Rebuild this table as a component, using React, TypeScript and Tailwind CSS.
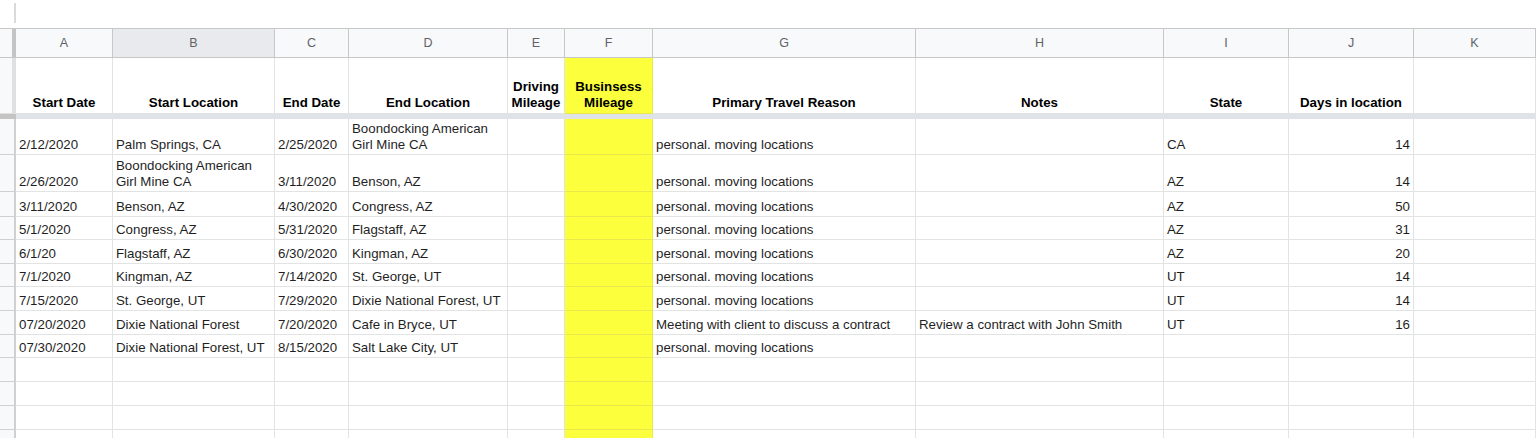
import clsx from "clsx";

type Col = { key: string; w: string; align?: "left" | "right" };

const COLS: Col[] = [
  { key: "A", w: "w-[97px]" },
  { key: "B", w: "w-[162px]" },
  { key: "C", w: "w-[74px]" },
  { key: "D", w: "w-[159px]" },
  { key: "E", w: "w-[57px]" },
  { key: "F", w: "w-[88px]" },
  { key: "G", w: "w-[263px]" },
  { key: "H", w: "w-[248px]" },
  { key: "I", w: "w-[125px]" },
  { key: "J", w: "w-[125px]", align: "right" },
  { key: "K", w: "flex-1" },
];

const HEADERS = [
  "Start Date",
  "Start Location",
  "End Date",
  "End Location",
  "Driving Mileage",
  "Businsess Mileage",
  "Primary Travel Reason",
  "Notes",
  "State",
  "Days in location",
  "",
];

const MOVE = "personal. moving locations";
const BOON = "Boondocking American Girl Mine CA";

const ROWS: string[][] = [
  ["2/12/2020", "Palm Springs, CA", "2/25/2020", BOON, "", "", MOVE, "", "CA", "14", ""],
  ["2/26/2020", BOON, "3/11/2020", "Benson, AZ", "", "", MOVE, "", "AZ", "14", ""],
  ["3/11/2020", "Benson, AZ", "4/30/2020", "Congress, AZ", "", "", MOVE, "", "AZ", "50", ""],
  ["5/1/2020", "Congress, AZ", "5/31/2020", "Flagstaff, AZ", "", "", MOVE, "", "AZ", "31", ""],
  ["6/1/20", "Flagstaff, AZ", "6/30/2020", "Kingman, AZ", "", "", MOVE, "", "AZ", "20", ""],
  ["7/1/2020", "Kingman, AZ", "7/14/2020", "St. George, UT", "", "", MOVE, "", "UT", "14", ""],
  ["7/15/2020", "St. George, UT", "7/29/2020", "Dixie National Forest, UT", "", "", MOVE, "", "UT", "14", ""],
  [
    "07/20/2020",
    "Dixie National Forest",
    "7/20/2020",
    "Cafe in Bryce, UT",
    "",
    "",
    "Meeting with client to discuss a contract",
    "Review a contract with John Smith",
    "UT",
    "16",
    "",
  ],
  ["07/30/2020", "Dixie National Forest, UT", "8/15/2020", "Salt Lake City, UT", "", "", MOVE, "", "", "", ""],
  ["", "", "", "", "", "", "", "", "", "", ""],
  ["", "", "", "", "", "", "", "", "", "", ""],
  ["", "", "", "", "", "", "", "", "", "", ""],
  ["", "", "", "", "", "", "", "", "", "", ""],
];

const HEIGHTS = [
  "h-[36px]",
  "h-[37px]",
  "h-[25px]",
  "h-[23px]",
  "h-[24px]",
  "h-[23px]",
  "h-[24px]",
  "h-[24px]",
  "h-[23px]",
  "h-[24px]",
  "h-[24px]",
  "h-[24px]",
  "h-[24px]",
];

function Cell({ col, text, header }: { col: Col; text: string; header?: boolean }) {
  const yellow = col.key === "F";
  const wrap = text === BOON;
  return (
    <div
      className={clsx(
        "flex shrink-0 items-end border-r border-b px-[3px]",
        col.w,
        yellow ? "border-[#e8e84a] bg-[#fcff3b]" : "border-[#e2e3e3] bg-white",
        header ? "justify-center pb-[2px] text-center font-bold text-black" : "pb-[1px] text-[#1f1f1f]",
        !header && col.align === "right" && "justify-end"
      )}
    >
      <span className={clsx(wrap || header ? "whitespace-normal" : "whitespace-nowrap")}>{text}</span>
    </div>
  );
}

export default function App() {
  return (
    <div className="h-[438px] w-[1536px] overflow-hidden bg-white font-['Liberation_Sans',Arial,sans-serif] text-[13.3px] leading-[16px]">
      {/* formula bar remnant */}
      <div className="h-[28px]">
        <div className="ml-[14px] h-[20px] w-[2px] translate-y-[3px] bg-[#dadada]" />
      </div>

      {/* column letters */}
      <div className="flex h-[30px] border-t border-b border-[#c7c7c7] bg-[#f8f9fa]">
        <div className="w-[16px] shrink-0 border-r-4 border-[#c4c4c4]" />
        {COLS.map((c) => (
          <div
            key={c.key}
            className={clsx(
              "flex shrink-0 items-center justify-center border-r border-[#c7c7c7] text-[12.5px] text-[#5f6368]",
              c.w,
              c.key === "B" && "bg-[#e8eaed]"
            )}
          >
            {c.key}
          </div>
        ))}
      </div>

      {/* header row */}
      <div className="flex h-[56px]">
        <div className="w-[16px] shrink-0 border-r-4 border-b border-[#e0e0e0] bg-[#f8f9fa]" />
        {COLS.map((c, i) => (
          <Cell key={c.key} col={c} text={HEADERS[i]} header />
        ))}
      </div>

      {/* freeze bar */}
      <div className="flex h-[5px]">
        <div className="w-[16px] shrink-0 bg-[#c4c4c4]" />
        <div className="flex-1 bg-[#dfe3e8]" />
      </div>

      {ROWS.map((row, r) => (
        <div key={r} className={clsx("flex", HEIGHTS[r])}>
          <div className="w-[16px] shrink-0 border-r-2 border-b border-[#d0d0d0] bg-[#f8f9fa]" />
          {COLS.map((c, i) => (
            <Cell key={c.key} col={c} text={row[i]} />
          ))}
        </div>
      ))}
    </div>
  );
}
